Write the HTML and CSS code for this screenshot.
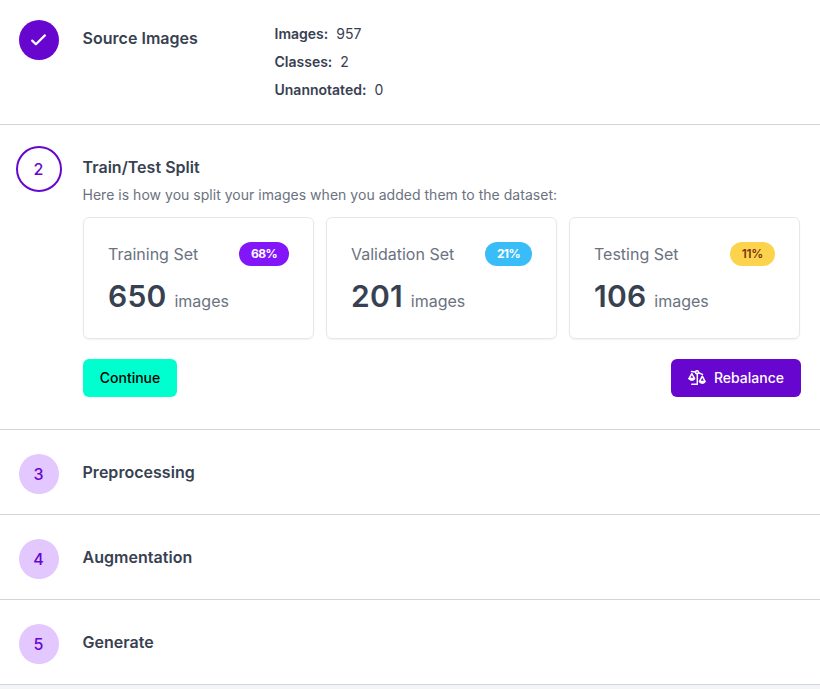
FILE: index.html
```html
<!DOCTYPE html>
<html lang="en">
<head>
<meta charset="utf-8">
<title>Generate Version</title>
<link rel="stylesheet" href="styles.css">
</head>
<body>
<main>
  <section class="step step-source">
    <div class="marker done"><svg width="16" height="12" viewBox="0 0 16 12"><path d="M1.2 6.6 L4.9 10.2 L13.9 1.4" fill="none" stroke="#fff" stroke-width="2.2" stroke-linecap="round" stroke-linejoin="round"/></svg></div>
    <h2>Source Images</h2>
    <dl class="facts">
      <div><dt>Images:</dt><dd>957</dd></div>
      <div><dt>Classes:</dt><dd>2</dd></div>
      <div><dt>Unannotated:</dt><dd>0</dd></div>
    </dl>
  </section>
  <section class="step step-split">
    <div class="marker active">2</div>
    <div class="content">
      <h2>Train/Test Split</h2>
      <p class="hint">Here is how you split your images when you added them to the dataset:</p>
      <div class="cards">
        <div class="card">
          <div class="card-head"><span>Training Set</span><span class="badge train">68%</span></div>
          <div class="count"><strong>650</strong><span>images</span></div>
        </div>
        <div class="card">
          <div class="card-head"><span>Validation Set</span><span class="badge valid">21%</span></div>
          <div class="count"><strong>201</strong><span>images</span></div>
        </div>
        <div class="card">
          <div class="card-head"><span>Testing Set</span><span class="badge test">11%</span></div>
          <div class="count"><strong>106</strong><span>images</span></div>
        </div>
      </div>
      <div class="actions">
        <button class="btn continue">Continue</button>
        <button class="btn rebalance"><svg width="18" height="16" viewBox="0 0 18 16" fill="none" stroke="#fff" stroke-width="1.5" stroke-linecap="round" stroke-linejoin="round"><path d="M3.5 1.5 L7.6 2 M10.5 2.8 L14.5 4.4 M9.3 4 V14.2 H3.8"/><circle cx="9" cy="2.2" r="1.5"/><path d="M3.8 3.6 L1 8.6 H6.6 Z M14.3 6.2 L11.5 11.6 H17.1 Z"/><path d="M1 8.8 H6.6 C6.2 11 1.4 11 1 8.8Z M11.5 11.8 H17.1 C16.7 14 11.9 14 11.5 11.8Z" fill="#fff" stroke-width="1"/></svg>Rebalance</button>
      </div>
    </div>
  </section>
  <section class="step"><div class="marker">3</div><h2>Preprocessing</h2></section>
  <section class="step"><div class="marker">4</div><h2>Augmentation</h2></section>
  <section class="step"><div class="marker">5</div><h2>Generate</h2></section>
</main>
</body>
</html>
```
FILE: styles.css
```css
* { box-sizing: border-box; }
body { margin: 0; background: #f3f4f6; color: #374151; font: 14px/20px Inter, sans-serif; overflow: hidden; }
h2, p, dl, dd { margin: 0; }
h2 { font-size: 16px; line-height: 24px; font-weight: 600; letter-spacing: 0.03px; text-indent: -0.5px; }
.step { display: flex; height: 85px; padding: 24px 19px 0; background: #fff; border-bottom: 1px solid #d1d5db; }
.step > h2 { margin: 6px 0 0 24px; }
.marker { display: flex; flex: none; align-items: center; justify-content: center; width: 40px; height: 40px; padding-right: 1px; border-radius: 50%; background: #e3c7ff; color: #6706ce; font-size: 16px; font-weight: 500; }
.done { background: #6706ce; }
.active { width: 46px; height: 46px; border: 2px solid #6706ce; background: #fff; }
.step-source { height: 125px; padding-top: 20px; }
.step-source > h2 { width: 191.5px; }
.facts > div { display: flex; gap: 8px; height: 28px; padding-top: 4px; }
.facts dt { font-weight: 600; }
.step-split { height: 305px; padding: 21px 19px 0 16px; }
.content { width: 718px; margin-left: 21px; padding-top: 9px; }
.hint { margin-top: 6px; color: #6b7280; letter-spacing: 0.025px; text-indent: -0.5px; }
.cards { display: grid; grid-template-columns: repeat(3, 231px); gap: 12px; margin-top: 12px; }
.card { height: 122px; padding: 24px; border: 1px solid #e5e7eb; border-radius: 6px; box-shadow: 0 1px 2px rgb(0 0 0 / 5%); }
.card-head { display: flex; align-items: center; justify-content: space-between; height: 24px; color: #6b7280; font-size: 16px; }
.badge { padding: 2px 12px; border-radius: 12px; font-size: 12px; font-weight: 700; letter-spacing: -0.6px; }
.train { background: #8315f9; color: #fff; }
.valid { background: #38bdf8; color: #fff; }
.test { background: #fcd34d; color: #78350f; font-weight: 600; letter-spacing: -0.3px; }
.count { display: flex; align-items: baseline; gap: 8px; margin-top: 10px; line-height: 40px; }
.count strong { font-size: 30px; font-weight: 600; letter-spacing: 0.2px; }
.count span { color: #6b7280; font-size: 16px; }
.actions { display: flex; justify-content: space-between; margin-top: 20px; }
.btn { display: flex; align-items: center; justify-content: center; gap: 8px; height: 38px; padding: 0; border: 0; border-radius: 6px; font: 500 14px/20px Inter, sans-serif; }
.continue { width: 94px; background: #00ffce; color: #000; }
.rebalance { width: 130px; background: #6706ce; color: #fff; }
```
